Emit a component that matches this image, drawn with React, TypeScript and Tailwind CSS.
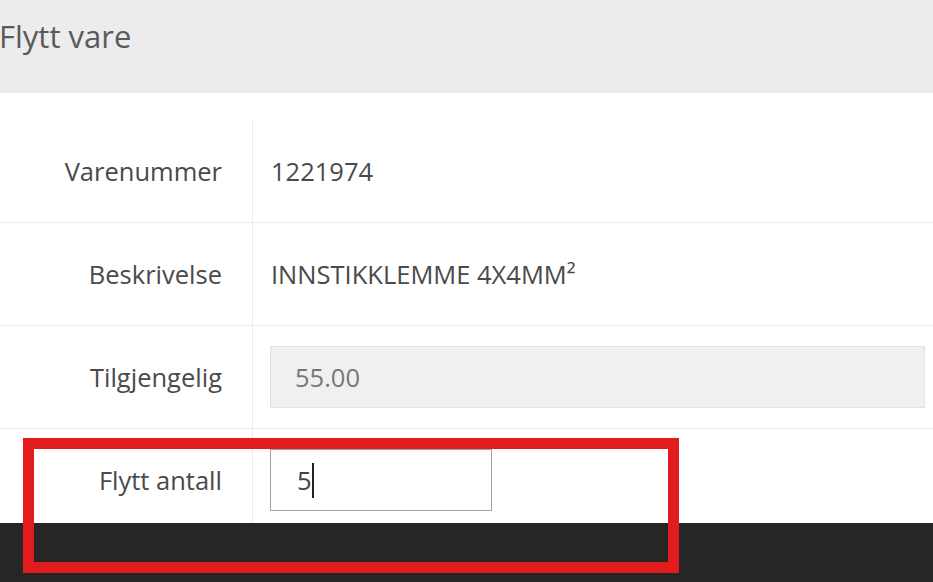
import React from "react";

const FONT = { fontFamily: '"Open Sans", "Noto Sans", "Liberation Sans", sans-serif' };

function Row({ label, children }: { label: string; children: React.ReactNode }) {
  return (
    <div className="flex h-[103px] shrink-0 border-b border-[#ebebeb]">
      <div className="flex w-[253px] shrink-0 items-center justify-end border-r border-[#ebebeb] pr-[30px] text-[25.5px] text-[#4a4a4a]">
        {label}
      </div>
      <div className="flex flex-1 items-center pl-[17px] pr-[8px] text-[25.5px] text-[#4a4a4a]">{children}</div>
    </div>
  );
}

export default function App() {
  return (
    <div className="relative flex h-[582px] w-full flex-col overflow-hidden bg-white" style={FONT}>
      {/* header */}
      <div className="h-[93px] shrink-0 bg-[#ececec] pt-[13px]">
        <h1 className="-ml-[1px] text-[31px] font-normal text-[#5a5a5a]">Flytt vare</h1>
      </div>

      {/* form rows */}
      <div className="flex flex-1 flex-col overflow-hidden pt-[27px]">
        <Row label="Varenummer">
          <span className="pl-[1px]">1221974</span>
        </Row>
        <Row label="Beskrivelse">
          <span className="pl-[1px]">INNSTIKKLEMME 4X4MM²</span>
        </Row>
        <Row label="Tilgjengelig">
          <div className="flex h-[62px] w-full items-center border border-[#e2e2e2] bg-[#f0f0f0] pl-[24px] text-[#777]">
            55.00
          </div>
        </Row>
        <Row label="Flytt antall">
          <div className="flex h-[62px] w-[222px] items-center border border-[#a3a3a3] bg-white pl-[26px] text-[#444]">
            5<span className="ml-[0px] h-[35px] w-[2px] bg-[#222]" />
          </div>
        </Row>
      </div>

      {/* footer bar */}
      <div className="h-[59px] shrink-0 bg-[#262626]" />

      {/* annotation */}
      <div className="absolute left-[23px] top-[438px] h-[135px] w-[656px] border-[11px] border-[#e21c1c]" />
    </div>
  );
}
